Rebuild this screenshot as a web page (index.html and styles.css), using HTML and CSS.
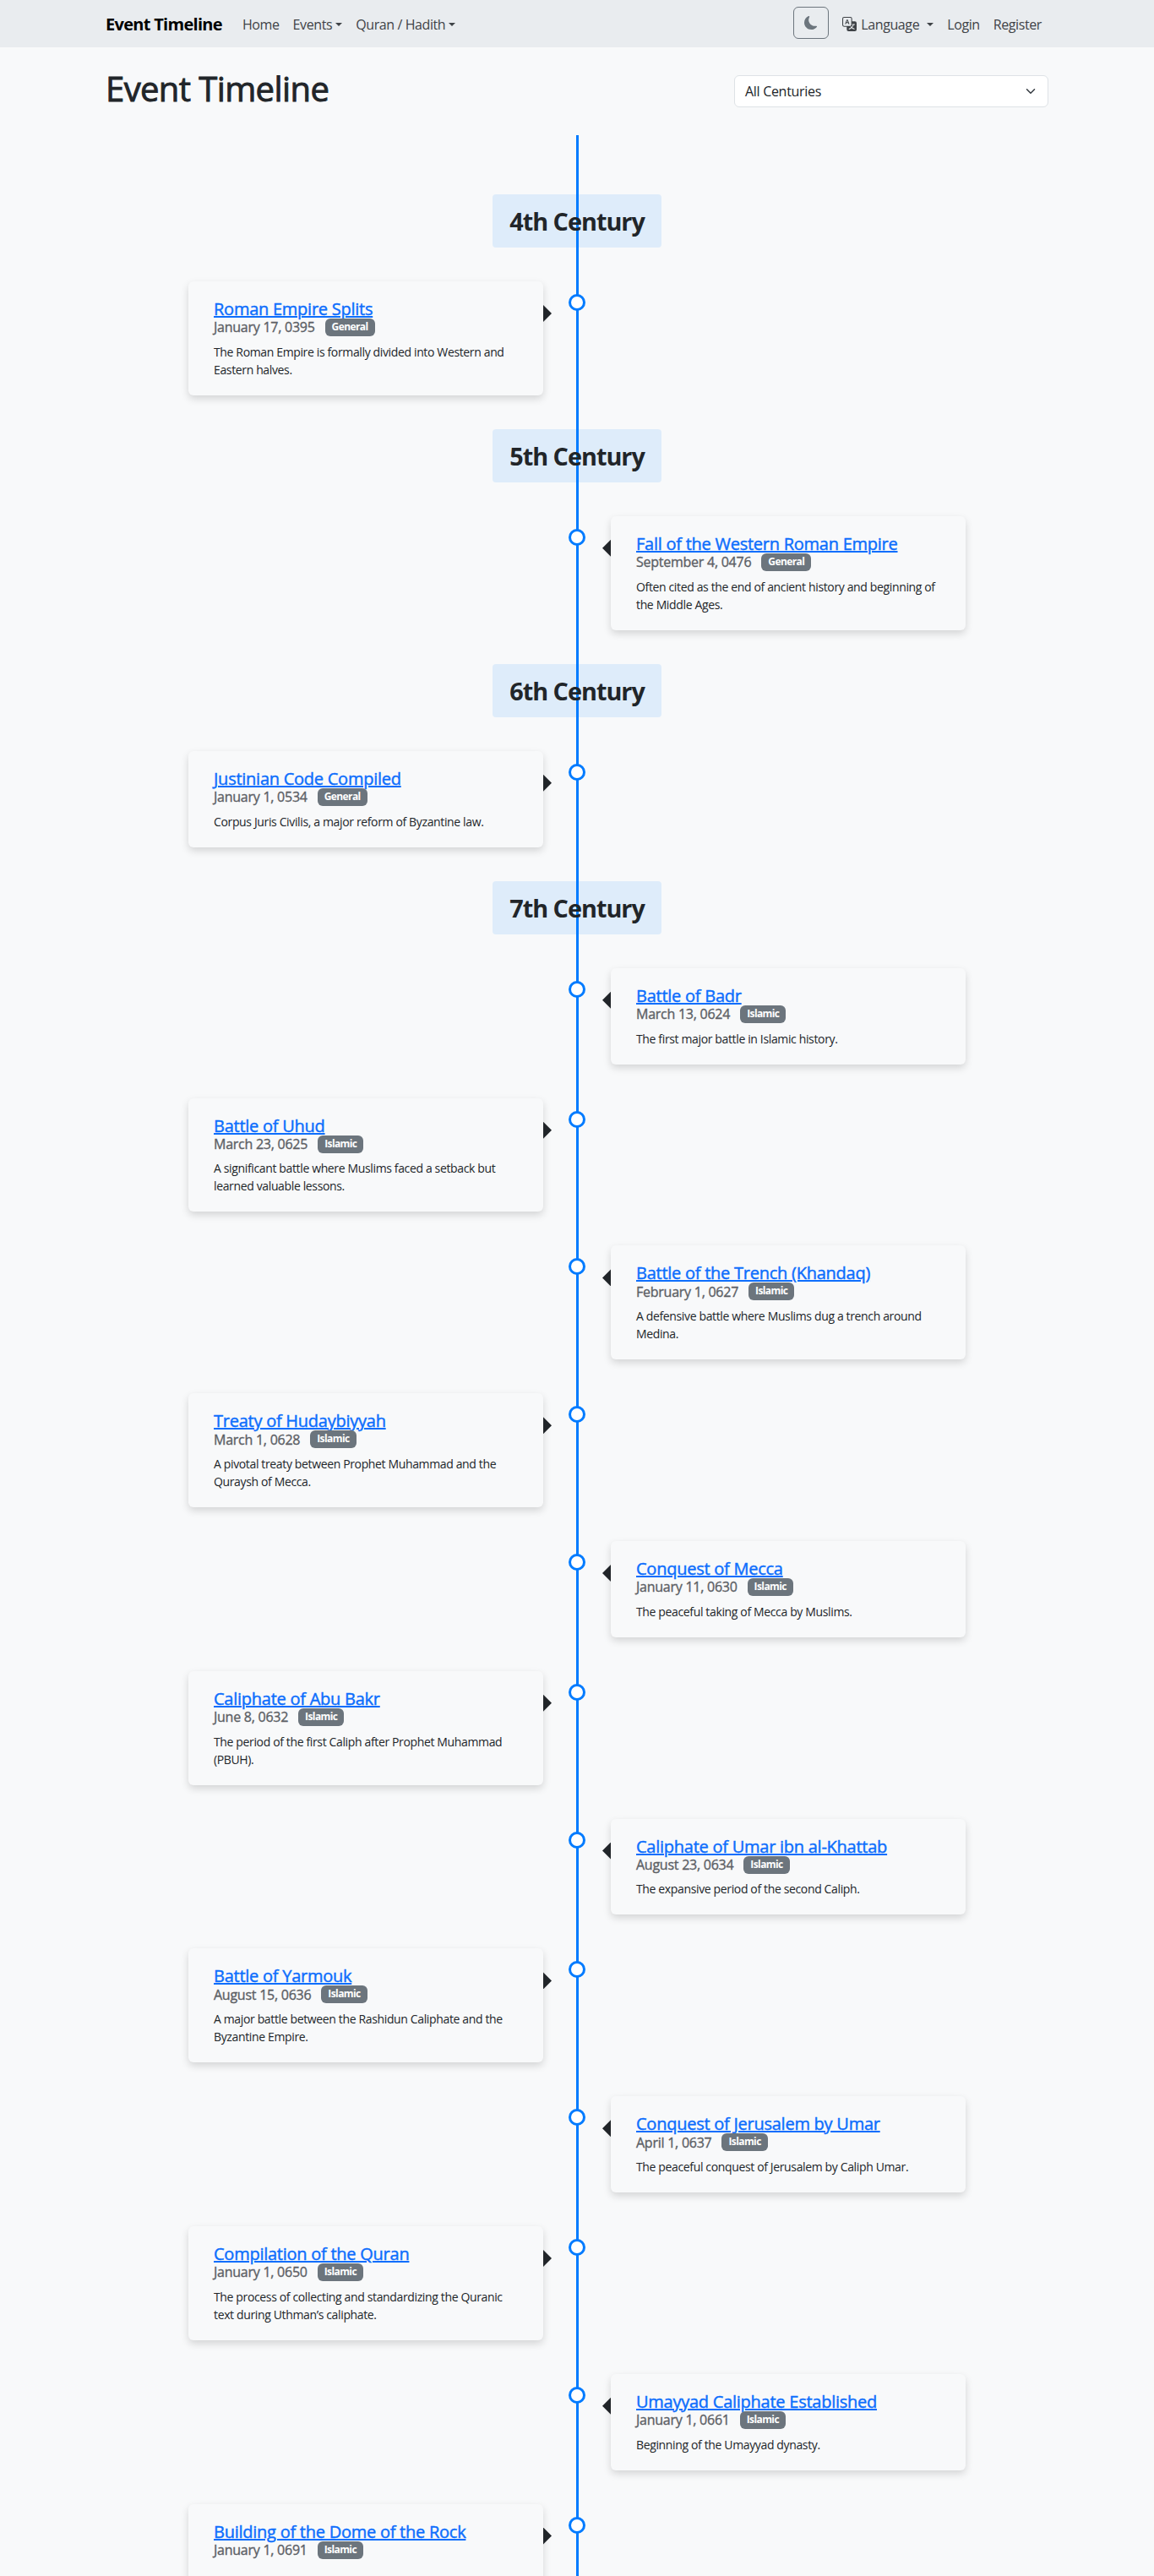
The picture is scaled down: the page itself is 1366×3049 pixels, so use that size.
FILE: index.html
```html
<!DOCTYPE html>
<html lang="en">
<head>
<meta charset="utf-8">
<title>Event Timeline</title>
<link rel="stylesheet" href="styles.css">
</head>
<body>
<nav class="navbar">
  <div class="container navbar-row">
    <a class="brand" href="#">Event Timeline</a>
    <div class="nav-group">
      <a class="nav-link" href="#">Home</a>
      <a class="nav-link caret" href="#">Events</a>
      <a class="nav-link caret" href="#">Quran / Hadith</a>
    </div>
    <div class="nav-group nav-end">
      <button class="theme-toggle" aria-label="Toggle theme">
        <svg width="16" height="16" viewBox="0 0 16 16" fill="currentColor"><path d="M6 .278a.77.77 0 0 1 .08.858 7.2 7.2 0 0 0-.878 3.46c0 4.021 3.278 7.277 7.318 7.277q.792-.001 1.533-.16a.79.79 0 0 1 .81.316.73.73 0 0 1-.031.893A8.35 8.35 0 0 1 8.344 16C3.734 16 0 12.286 0 7.71 0 4.266 2.114 1.312 5.124.06A.75.75 0 0 1 6 .278"/></svg>
      </button>
      <a class="nav-link caret language" href="#"><svg class="lang-icon" width="17" height="17" viewBox="0 0 16 16" fill="currentColor"><path d="M4.545 6.714 4.11 8H3l1.862-5h1.284L8 8H6.833l-.435-1.286zm1.634-.736L5.5 3.956h-.049l-.679 2.022z"/><path d="M0 2a2 2 0 0 1 2-2h7a2 2 0 0 1 2 2v3h3a2 2 0 0 1 2 2v7a2 2 0 0 1-2 2H7a2 2 0 0 1-2-2v-3H2a2 2 0 0 1-2-2zm2-1a1 1 0 0 0-1 1v7a1 1 0 0 0 1 1h7a1 1 0 0 0 1-1V2a1 1 0 0 0-1-1zm7.138 9.995q.289.451.63.846c-.748.575-1.673 1.001-2.768 1.292.178.217.451.635.555.867 1.125-.359 2.08-.844 2.886-1.494.777.665 1.739 1.165 2.93 1.472.133-.254.414-.673.629-.89-1.125-.253-2.057-.694-2.82-1.284.681-.747 1.222-1.651 1.621-2.757H14V8h-3v1.047h.765c-.318.844-.74 1.546-1.272 2.13a6 6 0 0 1-.415-.492 2 2 0 0 1-.94.31"/></svg>Language</a>
      <a class="nav-link" href="#">Login</a>
      <a class="nav-link" href="#">Register</a>
    </div>
  </div>
</nav>
<main class="container">
  <header class="page-head">
    <h1>Event Timeline</h1>
    <div class="select"><span>All Centuries</span><svg width="16" height="12" viewBox="0 0 16 16" fill="none" stroke="#343a40" stroke-width="2" stroke-linecap="round" stroke-linejoin="round"><path d="m2 5 6 6 6-6"/></svg></div>
  </header>
  <div class="timeline">
    <h2 class="century">4th Century</h2>
    <article class="event left"><a class="title" href="#">Roman Empire Splits</a><div class="meta"><span class="date">January 17, 0395</span><span class="badge">General</span></div><p>The Roman Empire is formally divided into Western and<br>Eastern halves.</p></article>
    <h2 class="century">5th Century</h2>
    <article class="event right"><a class="title" href="#">Fall of the Western Roman Empire</a><div class="meta"><span class="date">September 4, 0476</span><span class="badge">General</span></div><p>Often cited as the end of ancient history and beginning of<br>the Middle Ages.</p></article>
    <h2 class="century">6th Century</h2>
    <article class="event left"><a class="title" href="#">Justinian Code Compiled</a><div class="meta"><span class="date">January 1, 0534</span><span class="badge">General</span></div><p>Corpus Juris Civilis, a major reform of Byzantine law.</p></article>
    <h2 class="century">7th Century</h2>
    <article class="event right"><a class="title" href="#">Battle of Badr</a><div class="meta"><span class="date">March 13, 0624</span><span class="badge">Islamic</span></div><p>The first major battle in Islamic history.</p></article>
    <article class="event left"><a class="title" href="#">Battle of Uhud</a><div class="meta"><span class="date">March 23, 0625</span><span class="badge">Islamic</span></div><p>A significant battle where Muslims faced a setback but<br>learned valuable lessons.</p></article>
    <article class="event right"><a class="title" href="#">Battle of the Trench (Khandaq)</a><div class="meta"><span class="date">February 1, 0627</span><span class="badge">Islamic</span></div><p>A defensive battle where Muslims dug a trench around<br>Medina.</p></article>
    <article class="event left"><a class="title" href="#">Treaty of Hudaybiyyah</a><div class="meta"><span class="date">March 1, 0628</span><span class="badge">Islamic</span></div><p>A pivotal treaty between Prophet Muhammad and the<br>Quraysh of Mecca.</p></article>
    <article class="event right"><a class="title" href="#">Conquest of Mecca</a><div class="meta"><span class="date">January 11, 0630</span><span class="badge">Islamic</span></div><p>The peaceful taking of Mecca by Muslims.</p></article>
    <article class="event left"><a class="title" href="#">Caliphate of Abu Bakr</a><div class="meta"><span class="date">June 8, 0632</span><span class="badge">Islamic</span></div><p>The period of the first Caliph after Prophet Muhammad<br>(PBUH).</p></article>
    <article class="event right"><a class="title" href="#">Caliphate of Umar ibn al-Khattab</a><div class="meta"><span class="date">August 23, 0634</span><span class="badge">Islamic</span></div><p>The expansive period of the second Caliph.</p></article>
    <article class="event left"><a class="title" href="#">Battle of Yarmouk</a><div class="meta"><span class="date">August 15, 0636</span><span class="badge">Islamic</span></div><p>A major battle between the Rashidun Caliphate and the<br>Byzantine Empire.</p></article>
    <article class="event right"><a class="title" href="#">Conquest of Jerusalem by Umar</a><div class="meta"><span class="date">April 1, 0637</span><span class="badge">Islamic</span></div><p>The peaceful conquest of Jerusalem by Caliph Umar.</p></article>
    <article class="event left"><a class="title" href="#">Compilation of the Quran</a><div class="meta"><span class="date">January 1, 0650</span><span class="badge">Islamic</span></div><p>The process of collecting and standardizing the Quranic<br>text during Uthman’s caliphate.</p></article>
    <article class="event right"><a class="title" href="#">Umayyad Caliphate Established</a><div class="meta"><span class="date">January 1, 0661</span><span class="badge">Islamic</span></div><p>Beginning of the Umayyad dynasty.</p></article>
    <article class="event left last"><a class="title" href="#">Building of the Dome of the Rock</a><div class="meta"><span class="date">January 1, 0691</span><span class="badge">Islamic</span></div></article>
  </div>
</main>
</body>
</html>
```
FILE: styles.css
```css
*, *::before, *::after { box-sizing: border-box; }
body {
  margin: 0;
  height: 3049px;
  overflow: hidden;
  background: #f8f9fa;
  color: #212529;
  font-family: "Segoe UI", "Open Sans", "Noto Sans", sans-serif;
  font-size: 16px;
  line-height: 1.5;
}
a { color: inherit; text-decoration: none; }
.container { width: 1140px; margin: 0 auto; padding: 0 12px; }

.navbar { height: 56px; background: #e9ecef; }
.navbar-row { display: flex; align-items: center; height: 56px; }
.brand { margin-right: 16px; padding-top: 1px; color: #000; font-size: 20px; font-weight: 700; letter-spacing: -0.7px; white-space: nowrap; }
.nav-group { display: flex; align-items: center; }
.nav-end { margin-left: auto; }
.nav-link { padding: 9px 8px 8px; color: #3f4347; letter-spacing: -0.4px; white-space: nowrap; }
.caret::after {
  content: "";
  display: inline-block;
  margin-left: 4px;
  vertical-align: 4px;
  border: 4.8px solid transparent;
  border-top-color: currentColor;
  border-bottom: 0;
}
.language::after { margin-left: 9px; }
.lang-icon { margin-right: 5px; vertical-align: -2px; }
.theme-toggle {
  width: 42px; height: 38px; margin: 0 8px 2px 0; padding: 0;
  display: flex; align-items: center; justify-content: center;
  border: 1px solid #6c757d; border-radius: 6px; background: none; color: #6c757d;
}

.page-head { display: flex; justify-content: space-between; align-items: flex-start; height: 104px; padding-top: 24px; }
h1 { margin: 1px 0 0; font-size: 40px; font-weight: 400; line-height: 48px; letter-spacing: -0.6px; -webkit-text-stroke: 0.9px currentColor; }
.select {
  display: flex; align-items: center; justify-content: space-between;
  width: 372px; height: 38px; margin-top: 9px; padding: 0 12px;
  border: 1px solid #dee2e6; border-radius: 6px; background: #fff; letter-spacing: -0.3px;
}

.timeline {
  position: relative;
  display: flex;
  flex-direction: column;
  gap: 40px;
  width: 1000px;
  margin: 0 auto;
  padding-top: 69.7px;
}
.timeline::before {
  content: "";
  position: absolute;
  top: 0;
  left: 499px;
  width: 3px;
  height: 2889px;
  background: #007bff;
}
.century {
  position: relative;
  flex: none;
  align-self: center;
  width: 200px;
  height: 63.2px;
  margin: 0;
  padding: 10px 0;
  border-radius: 4px;
  background: rgba(0, 123, 255, 0.1);
  font-size: 28.8px;
  font-weight: 700;
  line-height: 43.2px;
  letter-spacing: -1px;
  text-align: center;
  white-space: nowrap;
}
.event {
  position: relative;
  flex: none;
  width: 420px;
  padding: 20px 30px;
  border-radius: 6px;
  background: #f8f9fa;
  box-shadow: 0 4px 10px rgba(0, 0, 0, 0.15);
}
.last { min-height: 135px; }
.left { margin-left: 40px; }
.right { margin-left: 540px; }
.event::before {
  content: "";
  position: absolute;
  top: 15px;
  width: 20px;
  height: 20px;
  border: 3px solid #007bff;
  border-radius: 50%;
  background: #fff;
}
.left::before { left: 450px; }
.right::before { left: -50px; }
.event::after {
  content: "";
  position: absolute;
  top: 28px;
  width: 10px;
  height: 20px;
  background: #212529;
}
.left::after { left: 420px; clip-path: polygon(0 0, 100% 50%, 0 100%); }
.right::after { left: -10px; clip-path: polygon(100% 0, 0 50%, 100% 100%); }
.title {
  display: block;
  width: max-content;
  height: 24px;
  color: #0d6efd;
  font-size: 20px;
  font-weight: 400;
  -webkit-text-stroke: 0.45px currentColor;
  line-height: 25px;
  letter-spacing: -0.25px;
  text-decoration: underline;
}
.meta { display: flex; align-items: center; gap: 12px; height: 20.8px; }
.date { color: #5c6065; letter-spacing: -0.25px; -webkit-text-stroke: 0.35px currentColor; }
.badge {
  position: relative;
  padding: 5px 8px 6px;
  border-radius: 6px;
  background: #6c757d;
  color: #fff;
  font-size: 12px;
  font-weight: 700;
  line-height: 10px;
  letter-spacing: -0.6px;
}
.event p { margin: 8px 0 0; font-size: 14px; line-height: 21px; letter-spacing: -0.36px; white-space: nowrap; }
```
